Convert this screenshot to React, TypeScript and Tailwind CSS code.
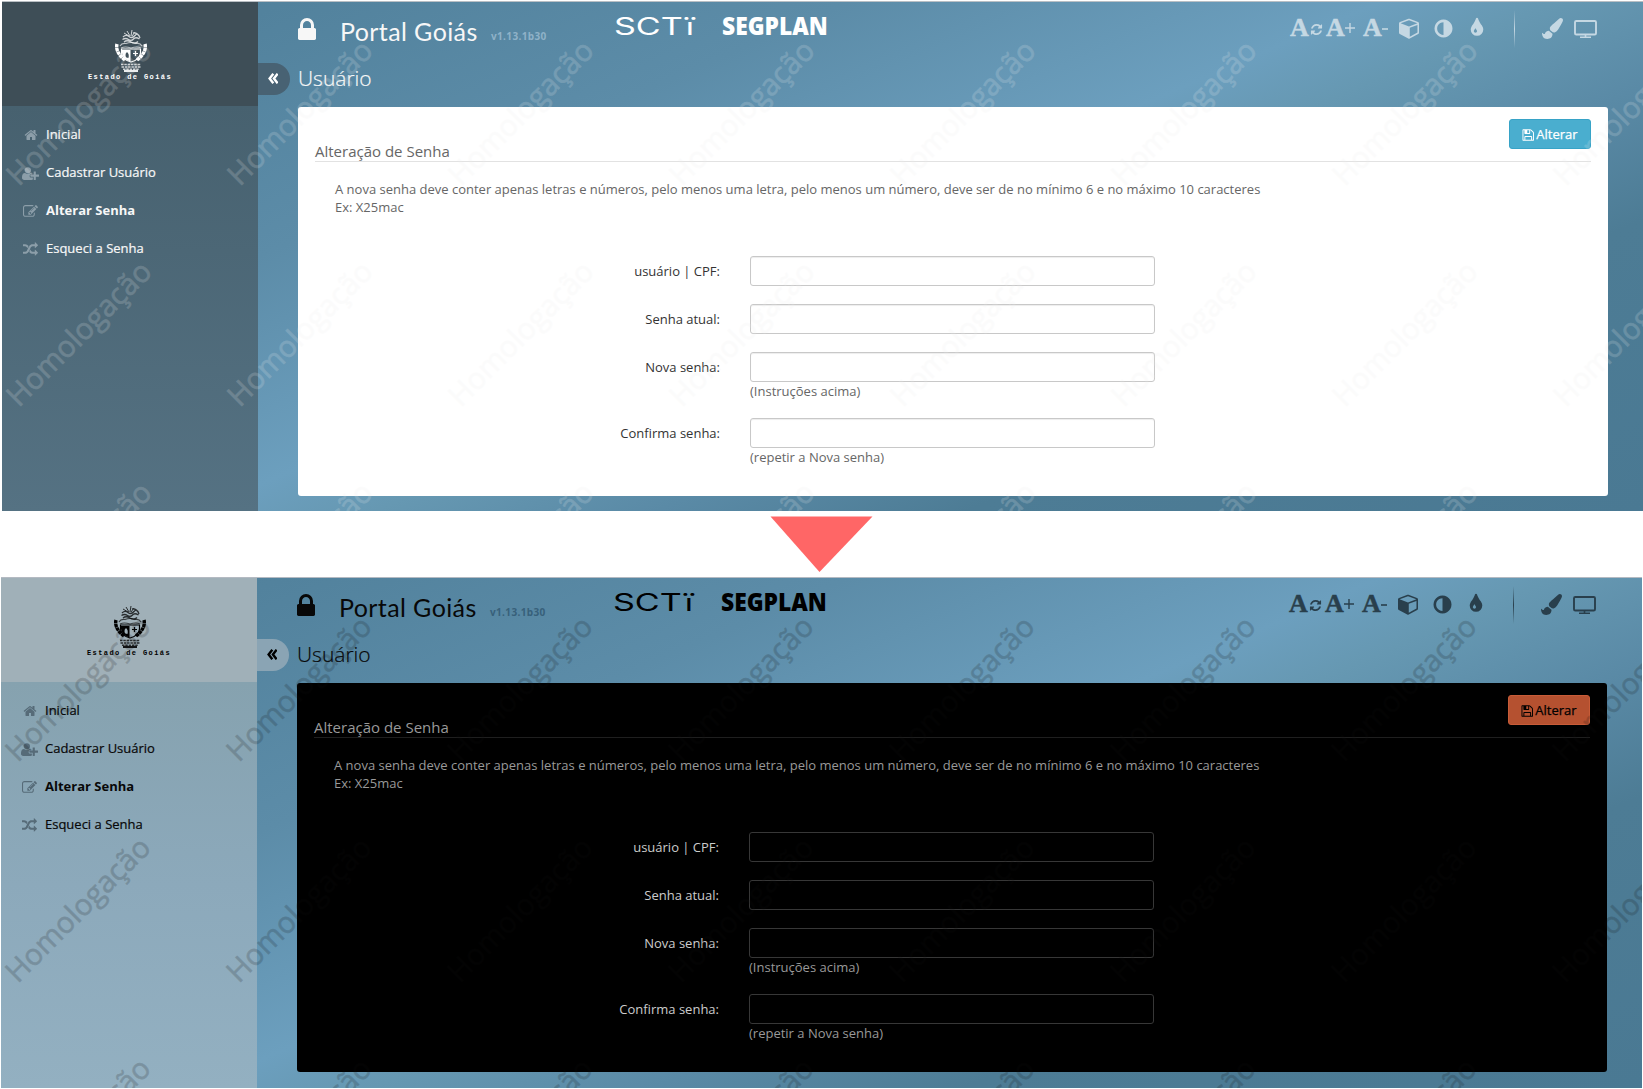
import React from "react";
import { FaPaintBrush } from "react-icons/fa";

const PATHS = {
  home: "M1472 992v480q0 26-19 45t-45 19h-384v-384h-256v384h-384q-26 0-45-19t-19-45v-480q0-1 .5-3t.5-3l575-474 575 474q1 2 1 6zm223-69l-62 74q-8 9-21 11h-3q-13 0-21-7l-692-577-692 577q-12 8-24 7-13-2-21-11l-62-74q-8-10-7-23.5t11-21.5l719-599q32-26 76-26t76 26l244 204v-195q0-14 9-23t23-9h192q14 0 23 9t9 23v408l219 182q10 8 11 21.5t-7 23.5z",
  lock: "M640 768h512v-192q0-106-75-181t-181-75-181 75-75 181v192zm832 96v576q0 40-28 68t-68 28h-960q-40 0-68-28t-28-68v-576q0-40 28-68t68-28h32v-192q0-184 132-316t316-132 316 132 132 316v192h32q40 0 68 28t28 68z",
  adjust: "M896 1440v-1088q-148 0-273 73t-198 198-73 273 73 273 198 198 273 73zm768-544q0 209-103 385.5t-279.5 279.5-385.5 103-385.5-103-279.5-279.5-103-385.5 103-385.5 279.5-279.5 385.5-103 385.5 103 279.5 279.5 103 385.5z",
  edit: "M888 1184l116-116-152-152-116 116v56h96v96h56zm440-720q-16-16-33 1l-350 350q-17 17-1 33t33-1l350-350q17-17 1-33zm80 594v190q0 119-84.5 203.5t-203.5 84.5h-832q-119 0-203.5-84.5t-84.5-203.5v-832q0-119 84.5-203.5t203.5-84.5h832q63 0 117 25 15 7 18 23 3 17-9 29l-49 49q-14 14-32 8-23-6-45-6h-832q-66 0-113 47t-47 113v832q0 66 47 113t113 47h832q66 0 113-47t47-113v-126q0-13 9-22l64-64q15-15 35-7t20 29zm-96-738l288 288-672 672h-288v-288zm444 132l-92 92-288-288 92-92q28-28 68-28t68 28l152 152q28 28 28 68t-28 68z",
  tint: "M896 1152q0-36-20-69-1-1-15.5-22.5t-25.5-38-25-44-21-50.5q-4-16-21-16t-21 16q-7 23-21 50.5t-25 44-25.5 38-15.5 22.5q-20 33-20 69 0 53 37.5 90.5t90.5 37.5 90.5-37.5 37.5-90.5zm512-128q0 212-150 362t-362 150-362-150-150-362q0-145 81-275 6-9 62.5-90.5t101-151 99.5-178 83-201.5q9-30 34-47t51-17 51.5 17 33.5 47q28 93 83 201.5t99.5 178 101 151 62.5 90.5q81 127 81 275z",
  save: "M512 1536h768v-384h-768v384zm896 0h128v-896q0-14-10-38.5t-20-34.5l-281-281q-10-10-34-20t-39-10v416q0 40-28 68t-68 28h-576q-40 0-68-28t-28-68v-416h-128v1280h128v-416q0-40 28-68t68-28h832q40 0 68 28t28 68v416zm-384-928v-320q0-13-9.5-22.5t-22.5-9.5h-192q-13 0-22.5 9.5t-9.5 22.5v320q0 13 9.5 22.5t22.5 9.5h192q13 0 22.5-9.5t9.5-22.5zm640 32v928q0 40-28 68t-68 28h-1344q-40 0-68-28t-28-68v-1344q0-40 28-68t68-28h928q40 0 88 20t76 48l280 280q28 28 48 76t20 88z",
  random: "M666 481q-60 92-137 273-22-45-37-72.5t-40.5-63.5-51-56.5-63-35-81.5-14.5h-224q-14 0-23-9t-9-23v-192q0-14 9-23t23-9h224q250 0 410 225zm1126 799q0 14-9 23l-320 320q-9 9-23 9-13 0-22.5-9.5t-9.5-22.5v-192q-32 0-85 .5t-81 1-73-1-71-5-64-10.5-63-18.5-58-28.5-59-40-55-53.5-56-69.5q59-93 136-273 22 45 37 72.5t40.5 63.5 51 56.5 63 35 81.5 14.5h256v-192q0-14 9-23t23-9q12 0 24 10l319 319q9 9 9 23zm0-896q0 14-9 23l-320 320q-9 9-23 9-13 0-22.5-9.5t-9.5-22.5v-192h-256q-48 0-87 15t-69 45-51 61.5-45 77.5q-32 62-78 171-29 66-49.5 111t-54 105-64 100-74 83-90 68.5-106.5 42-128 16.5h-224q-14 0-23-9t-9-23v-192q0-14 9-23t23-9h224q48 0 87-15t69-45 51-61.5 45-77.5q32-62 78-171 29-66 49.5-111t54-105 64-100 74-83 90-68.5 106.5-42 128-16.5h256v-192q0-14 9-23t23-9q12 0 24 10l319 319q9 9 9 23z",
  refresh: "M1639 1056q0 5-1 7-64 268-268 434.5t-478 166.5q-146 0-282.5-55t-243.5-157l-129 129q-19 19-45 19t-45-19-19-45v-448q0-26 19-45t45-19h448q26 0 45 19t19 45-19 45l-137 137q71 66 161 102t187 36q134 0 250-65t186-179q11-17 53-117 8-23 30-23h192q13 0 22.5 9.5t9.5 22.5zm25-800v448q0 26-19 45t-45 19h-448q-26 0-45-19t-19-45 19-45l138-138q-148-137-349-137-134 0-250 65t-186 179q-11 17-53 117-8 23-30 23h-199q-13 0-22.5-9.5t-9.5-22.5v-7q65-268 270-434.5t480-166.5q146 0 284 55.5t245 156.5l130-129q19-19 45-19t45 19 19 45z",
  cube: "M896 1629l640-349v-636l-640 233v752zm-64-865l698-254-698-254-698 254zm832-252v768q0 35-18 65t-49 47l-704 384q-28 16-61 16t-61-16l-704-384q-31-17-49-47t-18-65v-768q0-40 23-73t61-47l704-256q22-8 44-8t44 8l704 256q38 14 61 47t23 73z",
  userPlus: "M704 896q-159 0-271.5-112.5t-112.5-271.5 112.5-271.5 271.5-112.5 271.5 112.5 112.5 271.5-112.5 271.5-271.5 112.5zm960 128h352q13 0 22.5 9.5t9.5 22.5v192q0 13-9.5 22.5t-22.5 9.5h-352v352q0 13-9.5 22.5t-22.5 9.5h-192q-13 0-22.5-9.5t-9.5-22.5v-352h-352q-13 0-22.5-9.5t-9.5-22.5v-192q0-13 9.5-22.5t22.5-9.5h352v-352q0-13 9.5-22.5t22.5-9.5h192q13 0 22.5 9.5t9.5 22.5v352zm-736 224q0 52 38 90t90 38h256v238q-68 50-171 50h-874q-121 0-194-69t-73-190q0-53 3.5-103.5t14-109 26.5-108.5 43-97.5 62-81 85.5-53.5 111.5-20q19 0 39 17 79 61 154.5 91.5t164.5 30.5 164.5-30.5 154.5-91.5q20-17 39-17 132 0 217 96h-223q-52 0-90 38t-38 90v192z",
};

type IconName = keyof typeof PATHS;

function Icon({ name, className, box = "0 0 1792 1792" }: { name: IconName; className: string; box?: string }) {
  return (
    <svg viewBox={box} className={`${className} shrink-0`} fill="currentColor">
      <path d={PATHS[name]} />
    </svg>
  );
}

type Theme = {
  frame: string;
  brand: string;
  side: string;
  menuText: string;
  menuIcon: string;
  toggle: string;
  title: string;
  logos: string;
  version: string;
  tools: string;
  divider: string;
  card: string;
  legend: string;
  help: string;
  label: string;
  input: string;
  button: string;
  mark: string;
};

const light: Theme = {
  frame: "border-[#b9bfc4]",
  brand: "bg-[#3e4e57]",
  side: "bg-linear-to-b from-[#47616f] to-[#557283]",
  menuText: "text-[#f7f7f7]",
  menuIcon: "text-[#8c9ea9]",
  toggle: "bg-[#486273] text-white",
  title: "text-[#f7f7f7]",
  logos: "text-white",
  version: "text-[#8fb2c8]",
  tools: "text-[#c5d8e3]",
  divider: "via-[#c5d8e3]",
  card: "bg-white",
  legend: "text-[#666666] border-[#e2e2e2]",
  help: "text-[#666666]",
  label: "text-[#333333]",
  input: "border-[#c8c8c8] bg-white shadow-[inset_0_1px_1px_rgba(0,0,0,0.075)]",
  button: "bg-[#4aaecf] border-[#37a3c7] text-white",
  mark: "text-[#eeeeee]",
};

const dark: Theme = {
  frame: "border-[#b4bac2]",
  brand: "bg-[#a0b0b8]",
  side: "bg-linear-to-b from-[#86a2af] via-[#8ca9bb] to-[#93b0c1]",
  menuText: "text-[#080808]",
  menuIcon: "text-[#566b78]",
  toggle: "bg-[#8aa4b4] text-black",
  title: "text-[#080808]",
  logos: "text-black",
  version: "text-[#37607a]",
  tools: "text-[#293f4c]",
  divider: "via-[#293f4c]",
  card: "bg-black",
  legend: "text-[#999999] border-[#1f1f1f]",
  help: "text-[#999999]",
  label: "text-[#cccccc]",
  input: "border-[#373737] bg-black",
  button: "bg-[#b55130] border-[#c85c38] text-black",
  mark: "text-[#111111]",
};

function Crest() {
  return (
    <svg viewBox="0 0 32 42" className="ml-0.5 h-[42px] w-8" fill="none" stroke="currentColor">
      <g strokeWidth="1" opacity="0.75">
        <path d="M15 6 12 1M16 6 17 0M17 6 20 2M14 6 9 3" />
        <path d="M8 7q3-3 6-.5t6-1 5 2.500M7.500 9.500q3-2 6 0t5-.5 6 0M9 12q3-2.500 7 0t7-.5M18 3q4-1 6 3" strokeWidth="1.300" />
      </g>
      <path d="M5 16q2-3.500 6-2.500 5-2 10 0 4-1 6 2.500M6 18q4-2 10 0 6-2 10 0" strokeWidth="1.200" opacity="0.65" />
      <path d="M2 14q-1 4 1 8t7 8M30 14q1 4-1 8t-7 8" strokeWidth="3.400" strokeDasharray="3.500 0.400" />
      <path d="M6.500 19h19v4q-1 7-9.500 9-8.500-2-9.500-9z" strokeWidth="1.200" />
      <path
        d="M7 20h8.500v11.500q-7.500-2-8.500-8.500zM12 22q-2 1.500-1.500 4t3 2q1-4-1.500-6z"
        fill="currentColor"
        fillRule="evenodd"
        stroke="none"
      />
      <path d="M20.500 21v5M18 23.500h5" strokeWidth="1.200" />
      <path d="M6 34.500h20M6.500 37h19M8 39.200h16" strokeWidth="1.400" strokeDasharray="2.500 0.800" opacity="0.75" />
      <path d="M9 41h14" strokeWidth="1.800" />
    </svg>
  );
}

const menu: { icon: IconName; label: string; box?: string; size: string; bold?: boolean }[] = [
  { icon: "home", label: "Inicial", size: "size-[14px]" },
  { icon: "userPlus", label: "Cadastrar Usuário", box: "0 0 2048 1792", size: "h-[15px] w-[17px]" },
  { icon: "edit", label: "Alterar Senha", size: "size-[15px]", bold: true },
  { icon: "random", label: "Esqueci a Senha", size: "size-[15px]" },
];

function Sidebar({ t }: { t: Theme }) {
  return (
    <aside className="flex w-64 shrink-0 flex-col">
      <div className={`flex h-[104px] flex-col items-center pt-7 ${t.brand} ${t.logos}`}>
        <Crest />
        <span className="mt-0.5 whitespace-pre font-['Liberation_Mono'] text-[7px] leading-[7px] font-bold tracking-[1.4px]">
          Estado de Goiás
        </span>
      </div>
      <nav className={`flex flex-1 flex-col pt-2.5 ${t.side}`}>
        {menu.map((m) => (
          <a key={m.label} className={`flex h-[38px] items-center text-[13px] ${t.menuText}`}>
            <span className={`flex w-11 justify-center pl-[13px] ${t.menuIcon}`}>
              <Icon name={m.icon} box={m.box} className={m.size} />
            </span>
            <span className={m.bold ? "font-bold" : "[-webkit-text-stroke:0.2px_currentColor]"}>{m.label}</span>
          </a>
        ))}
      </nav>
    </aside>
  );
}

function LetterA() {
  return (
    <span className="text-[26px] leading-none font-bold [-webkit-text-stroke:0.5px_currentColor]">A</span>
  );
}

function Tools({ t }: { t: Theme }) {
  return (
    <div className={`flex h-[52px] items-center font-['Liberation_Serif'] ${t.tools}`}>
      <span className="flex w-9 items-center">
        <LetterA />
        <Icon name="refresh" className="mt-0.5 ml-px size-[13px]" />
      </span>
      <span className="flex w-[37px] items-center">
        <LetterA />
        <svg viewBox="0 0 10 10" className="mb-px size-2.5" stroke="currentColor" strokeWidth="1.400">
          <path d="M5 0v10M0 5h10" />
        </svg>
      </span>
      <span className="flex w-9 items-center">
        <LetterA />
        <svg viewBox="0 0 6 10" className="mt-0.5 h-2.5 w-1.5" stroke="currentColor" strokeWidth="1.600">
          <path d="M0 5h6" />
        </svg>
      </span>
      <Icon name="cube" box="0 0 1664 1792" className="h-[22px] w-[20px]" />
      <Icon name="adjust" className="ml-[14px] size-[21px]" />
      <Icon name="tint" className="ml-3 size-[22px]" />
      <span className={`ml-[26px] mt-0.5 h-[38px] w-px bg-linear-to-b from-transparent to-transparent ${t.divider}`} />
      <FaPaintBrush className="ml-[27px] size-[21px]" />
      <svg viewBox="0 0 23 18" className="ml-[11px] mt-0.5 h-[18px] w-[23px]" fill="none" stroke="currentColor">
        <rect x="1" y="1" width="21" height="13.500" rx="1.300" strokeWidth="1.900" />
        <path d="M6 17.200h11M11.500 14.500v2.700" strokeWidth="1.600" />
      </svg>
    </div>
  );
}

function Field({ t, label, hint }: { t: Theme; label: string; hint?: string }) {
  return (
    <div className={`flex ${hint ? "mb-[17px]" : "mb-[18px]"}`}>
      <label className={`-mb-0.5 flex h-8 w-[422px] shrink-0 items-center justify-end pr-[30px] ${t.label}`}>
        {label}
      </label>
      <div>
        <input className={`block h-[30px] w-[405px] rounded-[3px] border outline-none ${t.input}`} />
        {hint && <p className={`h-[19px] leading-[18px] ${t.help}`}>{hint}</p>}
      </div>
    </div>
  );
}

function Watermark({ t }: { t: Theme }) {
  return (
    <div className="pointer-events-none absolute inset-0 overflow-hidden opacity-[0.18]">
      <div className={`-mt-px -ml-[34px] grid w-[1768px] grid-cols-[repeat(8,221px)] auto-rows-[221px] ${t.mark}`}>
        {Array.from({ length: 24 }, (_, i) => (
          <div key={i} className="flex items-center justify-center">
            <span className="-rotate-45 text-[29.5px] leading-none [-webkit-text-stroke:0.6px_currentColor]">
              Homologação
            </span>
          </div>
        ))}
      </div>
    </div>
  );
}

function Portal({ t }: { t: Theme }) {
  return (
    <section className={`h-[511px] w-[1641px] overflow-hidden border-t ${t.frame}`}>
      <div className="relative flex h-[510px] bg-[linear-gradient(156.7deg,#4e7d96_0%,#52829d_10%,#5c8ca8_30%,#6c9fbe_48.8%,#6698b2_55%,#5a8aa6_65%,#4d7c95_76%,#4a7993_100%)]">
        <Sidebar t={t} />
        <div className="w-10 shrink-0 pt-[61px]">
          <button className={`flex h-8 w-8 items-center rounded-r-full pl-2.5 ${t.toggle}`}>
            <svg viewBox="0 0 10 11" className="-mt-0.5 h-[11px] w-2.5" fill="none" stroke="currentColor" strokeWidth="2.400">
              <path d="M5.300 .8 1.600 5.500 5.300 10.200M9.600.8 5.900 5.500l3.700 4.700" />
            </svg>
          </button>
        </div>
        <main className="flex w-[1310px] flex-col">
          <header className="flex h-[52px] items-start justify-between">
            <div className="flex">
              <Icon name="lock" box="320 128 1152 1408" className={`mt-4 -ml-px h-[22px] w-5 ${t.title}`} />
              <h1
                className={`mt-[13px] ml-[23px] w-[151px] font-['Lato'] text-[25px] leading-8 tracking-[0.4px] whitespace-nowrap ${t.title}`}
              >
                Portal Goiás
              </h1>
              <span
                className={`mt-[26px] w-[123px] text-[10px] leading-4 font-bold tracking-[0.35px] ${t.version}`}
              >
                v1.13.1b30
              </span>
              <span className={`mt-[11px] w-[108px] font-['Inter'] text-[24px] leading-7 font-normal ${t.logos}`}>
                <span className="inline-block origin-left scale-x-[1.420]">SCTï</span>
              </span>
              <span className={`mt-2.5 text-[24px] leading-7 font-extrabold ${t.logos}`}>
                <span className="inline-block origin-left scale-x-[0.950]">SEGPLAN</span>
              </span>
            </div>
            <div className="mr-[11px]">
              <Tools t={t} />
            </div>
          </header>
          <h2 className={`h-[53px] pt-2 text-[21px] leading-8 font-light [-webkit-text-stroke:0.2px_currentColor] ${t.title}`}>
            Usuário
          </h2>
          <div className={`h-[389px] rounded-[3px] px-[17px] pt-3 text-[13px] ${t.card}`}>
            <div className={`flex h-[43px] items-start justify-between border-b ${t.legend}`}>
              <span className="mt-5 text-[15px] leading-6">Alteração de Senha</span>
              <button
                className={`flex h-[30px] w-[82px] items-center justify-center gap-0.5 rounded-[3px] border pt-px ${t.button}`}
              >
                <Icon name="save" box="64 128 1600 1536" className="h-3 w-3" />
                <span className="[-webkit-text-stroke:0.25px_currentColor]">Alterar</span>
              </button>
            </div>
            <p className={`mt-[18px] ml-5 leading-[18px] ${t.help}`}>
              A nova senha deve conter apenas letras e números, pelo menos uma letra, pelo menos um número, deve ser de no
              mínimo 6 e no máximo 10 caracteres
              <br />
              Ex: X25mac
            </p>
            <form className="mt-10 ml-[13px]">
              <Field t={t} label="usuário | CPF:" />
              <Field t={t} label="Senha atual:" />
              <Field t={t} label="Nova senha:" hint="(Instruções acima)" />
              <Field t={t} label="Confirma senha:" hint="(repetir a Nova senha)" />
            </form>
          </div>
        </main>
        <Watermark t={t} />
      </div>
    </section>
  );
}

export default function App() {
  return (
    <div className="flex h-[1089px] w-[1643px] flex-col overflow-hidden bg-white pt-px font-['Open_Sans',sans-serif]">
      <div className="ml-0.5 h-[510px] shrink-0 overflow-hidden">
        <Portal t={light} />
      </div>
      <div className="flex h-[66px] shrink-0 items-start pt-[5px] pl-[770px]">
        <svg viewBox="0 0 104 57" className="h-[57px] w-[104px]" fill="#ff6666">
          <path d="M.5.500h102L49.500 56z" />
        </svg>
      </div>
      <div className="ml-px h-[512px] shrink-0 overflow-hidden">
        <Portal t={dark} />
      </div>
    </div>
  );
}
